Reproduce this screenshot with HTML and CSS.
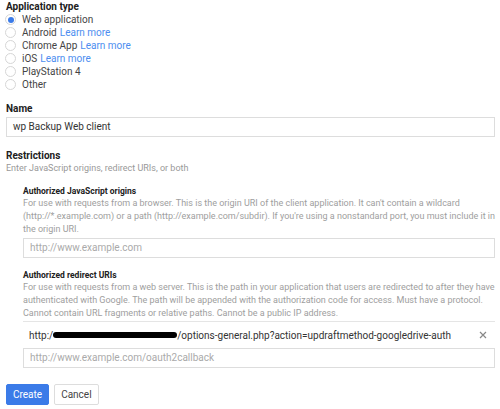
FILE: index.html
```html
<!DOCTYPE html>
<html lang="en">
<head>
  <meta charset="UTF-8">
  <title>Create client ID</title>
  <link rel="stylesheet" href="styles.css">
</head>
<body>
  <div class="page">

    <!-- Application type -->
    <div class="group">
      <div class="label">Application type</div>
      <ul class="radios">
        <li><span class="radio checked"></span>Web application</li>
        <li><span class="radio"></span>Android <a href="#">Learn more</a></li>
        <li><span class="radio"></span>Chrome App <a href="#">Learn more</a></li>
        <li><span class="radio"></span>iOS <a href="#">Learn more</a></li>
        <li><span class="radio"></span>PlayStation 4</li>
        <li><span class="radio"></span>Other</li>
      </ul>
    </div>

    <!-- Name -->
    <div class="group name-group">
      <div class="label">Name</div>
      <div class="input">wp Backup Web client</div>
    </div>

    <!-- Restrictions -->
    <div class="group restrictions">
      <div class="label">Restrictions</div>
      <p class="hint">Enter JavaScript origins, redirect URIs, or both</p>

      <div class="sub first">
        <div class="sub-label">Authorized JavaScript origins</div>
        <p class="desc">For use with requests from a browser. This is the origin URI of the client application. It can't contain a wildcard<br>(http://*.example.com) or a path (http://example.com/subdir). If you're using a nonstandard port, you must include it in<br>the origin URI.</p>
        <div class="input placeholder">http://www.example.com</div>
      </div>

      <div class="sub">
        <div class="sub-label">Authorized redirect URIs</div>
        <p class="desc">For use with requests from a web server. This is the path in your application that users are redirected to after they have<br>authenticated with Google. The path will be appended with the authorization code for access. Must have a protocol.<br>Cannot contain URL fragments or relative paths. Cannot be a public IP address.</p>
        <div class="uri-row">
          <span class="uri">http:/<span class="redact"></span>/options-general.php?action=updraftmethod-googledrive-auth</span>
          <svg class="remove" width="8" height="8" viewBox="0 0 8 8"><path d="M1 1L7 7M7 1L1 7" stroke="#888" stroke-width="1.2"/></svg>
        </div>
        <div class="input placeholder">http://www.example.com/oauth2callback</div>
      </div>
    </div>

    <!-- Actions -->
    <div class="actions">
      <button class="btn primary">Create</button>
      <button class="btn">Cancel</button>
    </div>
  </div>
</body>
</html>
```

FILE: styles.css
```css
/* Base */
* {
  margin: 0;
  padding: 0;
  box-sizing: border-box;
}

body {
  background: #fff;
  font-family: Roboto, "Liberation Sans", sans-serif;
  color: #333;
}

.page {
  padding: 1px 5px 0 6px;
}

/* Labels */
.label {
  font-size: 10px;
  font-weight: 700;
  line-height: 12px;
  color: #212121;
}

/* Radio list */
.radios {
  list-style: none;
}

.radios li {
  display: flex;
  align-items: center;
  height: 13px;
  font-size: 10px;
  color: #444;
}

.radios a {
  color: #4d8ef0;
  text-decoration: none;
  margin-left: 3px;
}

.radio {
  width: 11px;
  height: 11px;
  border: 1px solid #d6d6d6;
  border-radius: 50%;
  margin-right: 6px;
  margin-left: -1px;
  display: flex;
  align-items: center;
  justify-content: center;
}

.radio.checked::after {
  content: "";
  width: 6px;
  height: 6px;
  border-radius: 50%;
  background: #3b7be8;
}

/* Inputs */
.input {
  height: 20px;
  border: 1px solid #ddd;
  font-size: 10px;
  line-height: 18px;
  padding: 0 6px;
  color: #333;
}

.input.placeholder {
  color: #aaa;
}

.name-group {
  margin-top: 12px;
}

.name-group .label {
  margin-bottom: 2px;
}

.name-group .input {
  width: 489px;
}

/* Restrictions */
.restrictions {
  margin-top: 13px;
}

.hint {
  font-size: 9px;
  line-height: 12px;
  color: #999;
}

.sub {
  margin-left: 17px;
  width: 472px;
}

.sub.first {
  margin-top: 11px;
}

.sub + .sub {
  margin-top: 11px;
}

.sub-label {
  font-size: 8.5px;
  font-weight: 700;
  line-height: 12px;
  color: #212121;
}

.desc {
  font-size: 9px;
  line-height: 13px;
  color: #9e9e9e;
  white-space: nowrap;
  margin-bottom: 2px;
}

.sub + .sub .desc {
  margin-bottom: 1px;
}

.uri-row {
  display: flex;
  justify-content: space-between;
  align-items: center;
  border-top: 1px solid #e5e5e5;
  height: 27px;
  padding: 0 8px 0 6px;
  font-size: 10px;
  color: #333;
}

.redact {
  display: inline-block;
  width: 124px;
  height: 6px;
  background: #000;
  border-radius: 3px;
  vertical-align: middle;
  margin-top: -2px;
}

/* Buttons */
.actions {
  display: flex;
  gap: 5px;
  margin-top: 16px;
}

.btn {
  font-family: Roboto, "Liberation Sans", sans-serif;
  font-size: 10px;
  height: 21px;
  padding: 0 6px;
  border: 1px solid #ddd;
  border-radius: 2px;
  background: #fff;
  color: #444;
}

.btn.primary {
  background: #3b7be8;
  border-color: #3b7be8;
  color: #fff;
}
```
